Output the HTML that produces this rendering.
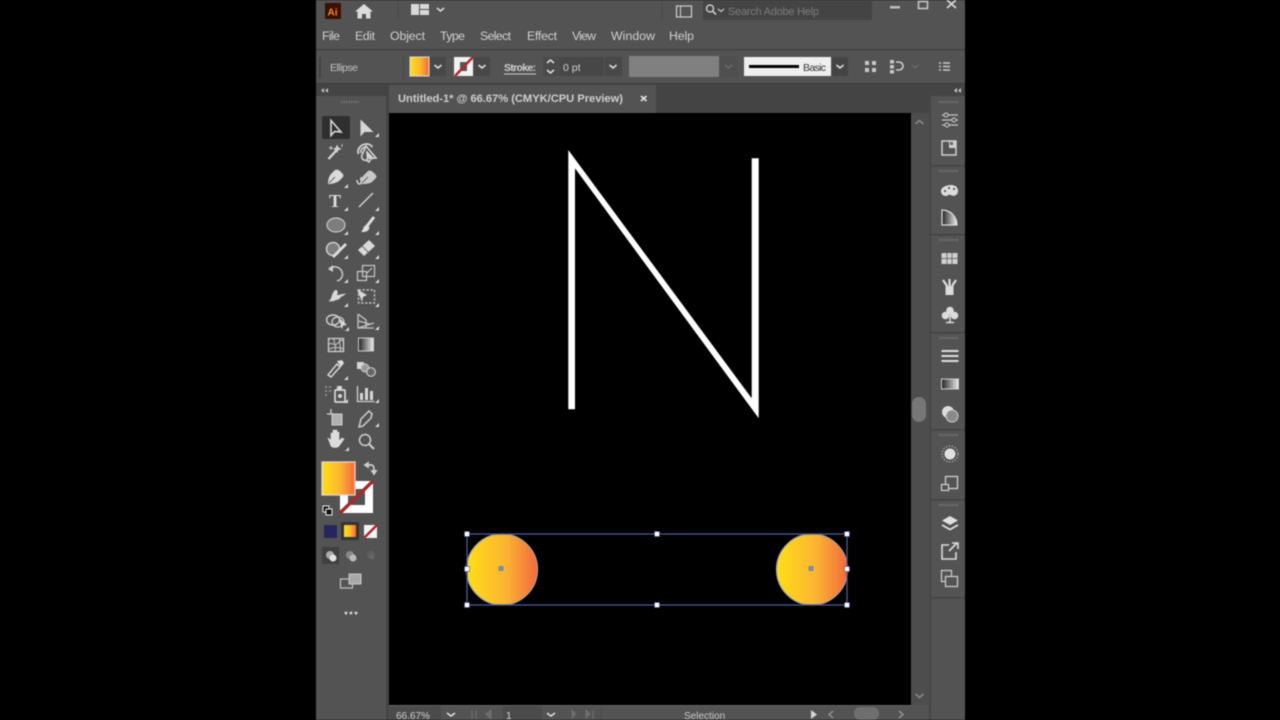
<!DOCTYPE html>
<html><head><meta charset="utf-8">
<style>
html,body{margin:0;padding:0;background:#000;width:1280px;height:720px;overflow:hidden}
svg{position:absolute;left:0;top:0;filter:blur(.6px)}
text{font-family:"Liberation Sans",sans-serif;fill:#d0d0d0}
.i{fill:none;stroke:#d4d4d4;stroke-width:1.600}
.f{fill:#d4d4d4;stroke:none}
.c{fill:none;stroke:#dedede;stroke-width:1.600}
</style></head><body>
<svg width="1280" height="720" viewBox="0 0 1280 720" xmlns="http://www.w3.org/2000/svg">
<defs>
<linearGradient id="g"><stop offset=".04" stop-color="#ffdc18"/><stop offset=".55" stop-color="#fbb532"/><stop offset="1" stop-color="#f2693e"/></linearGradient>
<linearGradient id="bw"><stop offset="0" stop-color="#222"/><stop offset="1" stop-color="#eee"/></linearGradient>
<g id="tri"><path d="M0 0h-4l4-4z" fill="#d8d8d8"/></g>
</defs>
<rect x="316" y="0" width="649" height="720" fill="#535353"/>
<!-- title bar -->
<rect x="325" y="3" width="16" height="16" rx="1" fill="#3c0f03"/>
<text x="327.500" y="15.500" font-size="10" font-weight="700" style="fill:#f08a2a">Ai</text>
<path d="M355 11.500l9-7.500 9 7.500h-2.500v7h-4.500v-4.500h-4v4.500h-4.500v-7z" fill="#dcdcdc"/>
<rect x="411" y="4" width="8" height="11" fill="#d8d8d8"/><rect x="420" y="4" width="9" height="5" fill="#d8d8d8"/><rect x="420" y="10" width="9" height="5" fill="#d8d8d8"/>
<path class="c" d="M437 8l3.500 3 3.500-3"/>
<path d="M398 0v20" stroke="#4b4b4b"/>
<path d="M662 0v22" stroke="#4b4b4b"/>
<rect x="676.500" y="6" width="15" height="11" fill="none" stroke="#cfcfcf" stroke-width="1.200"/><path d="M680.500 6v11" stroke="#cfcfcf"/>
<rect x="703" y="1" width="169" height="19" rx="1" fill="#444"/>
<circle cx="710" cy="8.500" r="3.500" fill="none" stroke="#c8c8c8" stroke-width="1.500"/><path d="M712.500 11l3.500 3.500" stroke="#c8c8c8" stroke-width="1.700"/>
<path d="M718 9l3 2.500 3-2.500" fill="none" stroke="#c8c8c8" stroke-width="1.200"/>
<text x="728" y="15" font-size="11" textLength="91" style="fill:#7c7c7c">Search Adobe Help</text>
<rect x="890" y="6" width="10" height="2.500" fill="#bdbdbd"/>
<rect x="918.500" y="1.500" width="9" height="7" fill="none" stroke="#c4c4c4" stroke-width="1.600"/>
<path d="M947 0l9 8M956 0l-9 8" stroke="#d4d4d4" stroke-width="1.800"/>
<!-- menu -->
<g font-size="12.300">
<text x="322" y="40" textLength="18">File</text><text x="355" y="40" textLength="20">Edit</text><text x="390" y="40" textLength="35">Object</text><text x="440" y="40" textLength="25">Type</text><text x="480" y="40" textLength="31">Select</text><text x="527" y="40" textLength="30">Effect</text><text x="572" y="40" textLength="24">View</text><text x="611" y="40" textLength="44">Window</text><text x="669" y="40" textLength="25">Help</text>
</g>
<rect x="316" y="49" width="649" height="1.500" fill="#414141"/>
<!-- control bar -->
<path d="M320 57v21" stroke="#444" stroke-width="2"/>
<text x="330" y="71" font-size="10.500" textLength="28" style="fill:#c0c0c0">Ellipse</text>
<rect x="403" y="56" width="1" height="24" fill="#4a4a4a"/>
<rect x="410" y="57" width="19" height="19" fill="url(#g)" stroke="#ddd" stroke-width="1"/>
<rect x="430" y="57" width="16" height="19" fill="#484848"/>
<path class="c" d="M434.500 65l3.500 3 3.500-3"/>
<rect x="454" y="57" width="19" height="19" fill="#f2f2f2"/>
<rect x="460" y="62" width="7" height="9" fill="#555"/>
<path d="M455 76l18-19" stroke="#b02a2a" stroke-width="2.500"/>
<rect x="474" y="57" width="16" height="19" fill="#484848"/>
<path class="c" d="M478.500 65l3.500 3 3.500-3"/>
<text x="504" y="71" font-size="10.500" font-weight="700" textLength="32">Stroke:</text>
<rect x="504" y="73.500" width="32" height="1" fill="#cfcfcf"/>
<rect x="543" y="57" width="15" height="19" fill="#4a4a4a"/>
<path class="c" d="M547 63l3.500-3 3.500 3M547 70l3.500 3 3.500-3"/>
<rect x="559" y="57" width="45" height="19" fill="#474747"/>
<text x="563" y="71" font-size="10.500">0 pt</text>
<rect x="605" y="57" width="17" height="19" fill="#484848"/>
<path class="c" d="M609.500 65l3.500 3 3.500-3"/>
<rect x="629" y="56" width="90" height="21" fill="#808080"/>
<rect x="720" y="56" width="18" height="21" fill="#4f4f4f"/>
<path d="M725 65l3.500 3 3.500-3" fill="none" stroke="#6f6f6f" stroke-width="1.400"/>
<rect x="744" y="57" width="87" height="19" fill="#efefef"/>
<rect x="749" y="65" width="50" height="3" fill="#000"/>
<text x="803" y="71" font-size="10.500" textLength="23" style="fill:#333">Basic</text>
<rect x="832" y="57" width="16" height="19" fill="#444"/>
<path class="c" d="M836.500 65l3.500 3 3.500-3"/>
<g fill="#c8c8c8"><rect x="865" y="61" width="4" height="4"/><rect x="872" y="61" width="4" height="4"/><rect x="865" y="68" width="4" height="4"/><rect x="872" y="68" width="4" height="4"/></g>
<rect x="890" y="60" width="4" height="3.500" fill="#c8c8c8"/><rect x="890" y="65" width="4" height="3.500" fill="#c8c8c8"/><rect x="890" y="70" width="4" height="3.500" fill="#c8c8c8"/>
<path d="M896 62h3a4 4 0 0 1 0 8h-3" fill="none" stroke="#d0d0d0" stroke-width="1.600"/>
<path d="M912 65l3 3 3-3" fill="none" stroke="#6d6d6d" stroke-width="1.300"/>
<path d="M939 63h2M943 63h7M939 66.500h2M943 66.500h7M939 70h2M943 70h7" stroke="#c8c8c8" stroke-width="1.500"/>
<!-- tab bar -->
<rect x="316" y="83" width="649" height="30" fill="#444"/>
<rect x="316" y="83" width="649" height="1" fill="#3d3d3d"/>
<rect x="389" y="85" width="267" height="28" fill="#535353"/>
<text x="398" y="102" font-size="11.200" font-weight="700" textLength="225" style="fill:#cecece">Untitled-1* @ 66.67% (CMYK/CPU Preview)</text>
<path d="M641 96l5.500 5M646.500 96l-5.500 5" stroke="#e0e0e0" stroke-width="1.800"/>
<!-- left toolbar -->
<rect x="316" y="96" width="70" height="624" fill="#535353"/>
<rect x="386" y="96" width="3" height="624" fill="#444"/>
<path d="M324 88l-3 2.500 3 2.500zM328 88l-3 2.500 3 2.500z" fill="#bdbdbd"/>
<path d="M341 102h18" stroke="#707070" stroke-width="2.500" stroke-dasharray="1.500 1"/>
<rect x="322" y="116" width="28" height="23" rx="2" fill="#2f2f2f"/>
<path d="M331 120.500v15l3.500-4 6.500 .5z" fill="none" stroke="#d8d8d8" stroke-width="1.600"/>
<path d="M360.500 119.500v17l4-4.500 9 0z" fill="#d6d6d6"/><use href="#tri" x="379" y="137"/>
<!-- wand / lasso -->
<path d="M328.500 159l10.500-11.500" stroke="#d6d6d6" stroke-width="2.400"/><path d="M337 145.500l1 2.500 2.500 1-2.500 1-1 2-1-2-2-1 2-1zM331 146v4M329 148h4M342 144v3" stroke="#d0d0d0" fill="#d0d0d0" stroke-width=".9"/>
<path d="M358.500 154c-2-5 3-10 8-10 3 0 4 1 6 3" fill="none" stroke="#d4d4d4" stroke-width="1.800"/><path d="M361 153c-1-3 2-6 5-6M366 146l10 12-5 .5-2 3.500-3-2c-3 1-5-2-4-5z" fill="none" stroke="#d4d4d4" stroke-width="1.600"/><path d="M366 150l8 8-5 .5-2 3z" fill="#d4d4d4"/>
<!-- pen -->
<path d="M328 184c0-4 1-8 3-10l4-4c2-1 4 0 6 2s3 3 2 5l-4 4c-3 2-7 3-11 3z" fill="#dadada"/><path d="M329 183l6-6" stroke="#666"/><use href="#tri" x="348" y="188"/>
<path d="M357 180c0 4 3 5 4 3s-1-4 0-5 1 1 2 2" fill="none" stroke="#d4d4d4" stroke-width="1.500"/><path d="M360 184c1-4 2-7 4-9l4-4c2-1 4 0 6 2s3 3 2 5l-4 4c-3 2-7 2-12 2z" fill="#c8c8c8"/><path d="M362 183l6-6" stroke="#666"/>
<!-- T / line -->
<text x="329" y="207" font-size="18" font-weight="700" style="font-family:'Liberation Serif',serif;fill:#dedede">T</text><use href="#tri" x="348" y="211"/>
<path d="M359 207l14-14" stroke="#d0d0d0" stroke-width="1.500"/><use href="#tri" x="379" y="211"/>
<!-- ellipse / brush -->
<ellipse cx="336" cy="225" rx="9" ry="7" fill="#7d7d7d" stroke="#c8c8c8" stroke-width="1.200"/><use href="#tri" x="348" y="235"/>
<path d="M374 217l-7 9" stroke="#dcdcdc" stroke-width="3"/><path d="M366 225c3 0 4 2 3 4-1 3-5 3-8 3 2-1 2-6 5-7z" fill="#dcdcdc"/><use href="#tri" x="379" y="235"/>
<!-- shaper / eraser -->
<circle cx="333" cy="249" r="6.500" fill="#7d7d7d" stroke="#cfcfcf" stroke-width="1.500"/><path d="M333 257l13-13" stroke="#dedede" stroke-width="2.800"/><use href="#tri" x="348" y="259"/>
<path d="M358 250l11-10 6 6-11 10z" fill="#dadada"/><path d="M362 246l7 7" stroke="#666"/><use href="#tri" x="379" y="259"/>
<!-- rotate / scale -->
<path d="M329 269c4-3 9-3 12 1s1 10-4 11" fill="none" stroke="#c8c8c8" stroke-width="1.600"/><path d="M333 265l-5 4 5 3z" fill="#d0d0d0"/><use href="#tri" x="348" y="283"/>
<rect x="357.500" y="271.500" width="9" height="9" fill="none" stroke="#c8c8c8" stroke-width="1.200"/><rect x="362.500" y="265.500" width="12" height="11" fill="none" stroke="#c8c8c8" stroke-width="1.200"/><path d="M367 273l5-5" stroke="#d0d0d0"/><use href="#tri" x="379" y="283"/>
<!-- width / free transform -->
<path d="M328 301c3-1 3-3 4-6 1-2 2-5 4-5s2 3 1 5c3 0 6-2 9-1l-5 3c-1 1-2 3-5 3-2 1-3 2-8 1z" fill="#d8d8d8"/><use href="#tri" x="348" y="307"/>
<rect x="358.500" y="290" width="16" height="13" fill="none" stroke="#bdbdbd" stroke-dasharray="2.500 1.500" stroke-width="1.400"/><path d="M357 289l10 6-4 2-1 5z" fill="#d8d8d8"/><use href="#tri" x="379" y="307"/>
<!-- shape builder / perspective -->
<ellipse cx="333" cy="320" rx="6.500" ry="5" fill="none" stroke="#cfcfcf" stroke-width="1.400"/><ellipse cx="338" cy="322" rx="6" ry="5" fill="none" stroke="#cfcfcf" stroke-width="1.300"/><path d="M339 318l8 7-4 .5-1 4z" fill="#dcdcdc"/><use href="#tri" x="349" y="331"/>
<path d="M358 314v14h16M358 314l8 6v8M358 328l16-5M358 321l12 3" fill="none" stroke="#c4c4c4" stroke-width="1.300"/><use href="#tri" x="379" y="330"/>
<!-- mesh / gradient -->
<rect x="328.500" y="338.500" width="15" height="13" fill="none" stroke="#d0d0d0" stroke-width="1.300"/><path d="M329 344c4-2 5 3 9-1s3-3 5-2M329 349c4-1 6-3 14 0M334 338c-1 4 3 8 1 13M340 338c-2 5 2 8 0 13" fill="none" stroke="#c8c8c8"/>
<rect x="358.500" y="338" width="15" height="13" fill="url(#bw)" stroke="#ccc"/>
<!-- eyedropper / blend -->
<path d="M328 375l9-11 3 3-9 10z" fill="none" stroke="#d4d4d4" stroke-width="1.500"/><path d="M337 361l5-1 2 3-3 4z" fill="#dcdcdc"/><use href="#tri" x="348" y="380"/>
<rect x="357" y="362" width="7" height="7" fill="#d6d6d6"/><circle cx="365" cy="368" r="4" fill="#999" stroke="#ccc"/><circle cx="371" cy="372" r="4.300" fill="#666" stroke="#ccc" stroke-width="1.200"/>
<!-- symbol sprayer / graph -->
<path d="M325 387h2M329 387h2M325 391h2M329 391h2M325 395h2" stroke="#9b9b9b" stroke-width="1.500"/><rect x="335" y="390" width="10" height="12" rx="1" fill="none" stroke="#d8d8d8" stroke-width="1.700"/><rect x="337" y="386" width="5" height="4" fill="#d8d8d8"/><circle cx="340" cy="396" r="2" fill="#d8d8d8"/><use href="#tri" x="348" y="403"/>
<path d="M357.500 386v15.500h17" fill="none" stroke="#d0d0d0" stroke-width="1.300"/><path d="M360 393h3v7h-3zM365 388h3v12h-3zM370 391h3v9h-3z" fill="#d8d8d8"/><use href="#tri" x="379" y="403"/>
<!-- artboard / slice -->
<path d="M331 409v5M327 414h7" stroke="#cfcfcf" stroke-width="1.300"/><rect x="332" y="414" width="10" height="11" fill="#b0b0b0" stroke="#cfcfcf"/>
<path d="M359 427l2-8 8-8 3 3-1 4-8 8z" fill="none" stroke="#d0d0d0" stroke-width="1.500"/><use href="#tri" x="379" y="427"/>
<!-- hand / zoom -->
<path d="M328 438l3 2v-7h2v5-8h2v8-8h2v8-6h2v9l3-3 2 1-5 7c-2 2-6 2-8 0z" fill="#dcdcdc" stroke="#dcdcdc" stroke-width=".6"/><use href="#tri" x="349" y="451"/>
<circle cx="365" cy="440" r="5.500" fill="none" stroke="#cfcfcf" stroke-width="1.500"/><path d="M369 444l5 5" stroke="#cfcfcf" stroke-width="2"/>
<!-- fill/stroke -->
<rect x="340" y="481" width="33" height="32" fill="#fff"/>
<rect x="348" y="489" width="17" height="16" fill="#535353"/>
<path d="M340 513l33-32" stroke="#a82a2a" stroke-width="3.500"/>
<rect x="322" y="462" width="33" height="33" fill="url(#g)" stroke="#e6d8c8" stroke-width="1.300"/>
<path d="M367 465h4c2 0 3 2 3 4v4M365 465l3-2v4zM372 471l2 3 2-3z" fill="none" stroke="#cfcfcf" stroke-width="1.700"/>
<rect x="323" y="506" width="6" height="6" fill="#111" stroke="#eee"/><rect x="326" y="509" width="6" height="6" fill="#111" stroke="#eee"/>
<rect x="324" y="525" width="13" height="13" fill="#26265e"/>
<rect x="341" y="522" width="18" height="18" rx="1" fill="#333"/>
<rect x="344" y="525" width="12" height="12" fill="url(#g)"/>
<rect x="364" y="525" width="13" height="13" fill="#f4f4f4"/><path d="M364 538l13-13" stroke="#a82a2a" stroke-width="2.500"/>
<rect x="322" y="547" width="17" height="17" fill="#404040"/>
<circle cx="330" cy="555" r="4" fill="#aaa"/><circle cx="333" cy="558" r="3.500" fill="#e4e4e4"/>
<circle cx="350" cy="555" r="4" fill="#888"/><circle cx="353" cy="558" r="3.500" fill="#bbb"/>
<circle cx="371" cy="555" r="4" fill="#5f5f5f"/><circle cx="372" cy="557" r="2.500" fill="#666"/>
<rect x="340.500" y="579" width="12" height="9" fill="none" stroke="#bdbdbd" stroke-width="1.300"/>
<rect x="349" y="574" width="12" height="10" fill="#a8a8a8" stroke="#c8c8c8"/>
<circle cx="346" cy="613" r="1.500" fill="#cfcfcf"/><circle cx="351" cy="613" r="1.500" fill="#cfcfcf"/><circle cx="356" cy="613" r="1.500" fill="#cfcfcf"/>
<!-- canvas -->
<rect x="389" y="113" width="522" height="592" fill="#000"/>
<polygon points="568.300,150 751.700,398.300 751.700,158.300 758.700,158.300 758.700,418.300 575,168.300 575,409.300 568.300,409.300" fill="#fff"/>
<circle cx="502" cy="569.500" r="35.500" fill="url(#g)" stroke="#a9a49e" stroke-width="1.200"/>
<circle cx="812" cy="569.500" r="35.500" fill="url(#g)" stroke="#a9a49e" stroke-width="1.200"/>
<rect x="498.500" y="566" width="5" height="5" fill="#7f8a9c"/>
<rect x="808.500" y="566" width="5" height="5" fill="#7f8a9c"/>
<rect x="467" y="534" width="380" height="71" fill="none" stroke="#4d5a94" stroke-width="1.300"/>
<g fill="#fff" stroke="#3d4a80" stroke-width=".6">
<rect x="464.500" y="531.500" width="5" height="5"/><rect x="654.500" y="531.500" width="5" height="5"/><rect x="844.500" y="531.500" width="5" height="5"/>
<rect x="464.500" y="566.500" width="5" height="5"/><rect x="844.500" y="566.500" width="5" height="5"/>
<rect x="464.500" y="602.500" width="5" height="5"/><rect x="654.500" y="602.500" width="5" height="5"/><rect x="844.500" y="602.500" width="5" height="5"/>
</g>
<!-- vertical scrollbar -->
<rect x="911" y="113" width="18" height="607" fill="#4d4d4d"/>
<path d="M915.500 124l4-3.500 4 3.500" fill="none" stroke="#8a8a8a" stroke-width="1.500"/>
<path d="M915.500 694l4 3.500 4-3.500" fill="none" stroke="#8a8a8a" stroke-width="1.500"/>
<rect x="912" y="397" width="14" height="25" rx="7" fill="#777"/>
<!-- right dock -->
<rect x="929" y="96" width="36" height="624" fill="#535353"/>
<rect x="929" y="96" width="2" height="624" fill="#464646"/>
<path d="M957 88l-3 2.500 3 2.500zM961 88l-3 2.500 3 2.500z" fill="#c4c4c4"/>
<g fill="#424242"><rect x="930" y="165" width="35" height="1.500"/><rect x="930" y="234" width="35" height="1.500"/><rect x="930" y="332" width="35" height="1.500"/><rect x="930" y="429" width="35" height="1.500"/><rect x="930" y="499" width="35" height="1.500"/><rect x="930" y="597" width="35" height="1.500"/></g>
<g stroke="#6f6f6f" stroke-width="2.500" stroke-dasharray="1.500 1"><path d="M939 102h19M939 171h19M939 240h19M939 338h19M939 435h19M939 505h19"/></g>
<!-- r icons -->
<path d="M942 115h16M942 120h16M942 125h16" stroke="#c4c4c4" stroke-width="1.200"/><circle cx="946" cy="115" r="2" fill="#535353" stroke="#cfcfcf"/><circle cx="954" cy="120" r="2" fill="#535353" stroke="#cfcfcf"/><circle cx="947" cy="125" r="2" fill="#535353" stroke="#cfcfcf"/>
<rect x="942" y="141" width="14" height="14" fill="none" stroke="#d0d0d0" stroke-width="1.500"/><path d="M949 141h7v7h-7z" fill="#d0d0d0"/><rect x="950" y="142" width="3" height="3" fill="#666"/>
<path d="M941 191c0-4 6-6 10-6s7 2 7 6-4 6-7 4c-3-1-3 1-5 1-3 0-5-2-5-5z" fill="#dcdcdc"/><circle cx="945" cy="191" r="1.100" fill="#555"/><circle cx="949" cy="188" r="1.100" fill="#555"/><circle cx="954" cy="189" r="1.100" fill="#555"/>
<path d="M942 210c8 0 15 6 15 15h-15z" fill="url(#bw)" stroke="#dcdcdc" stroke-width="1.200"/>
<rect x="941.500" y="253" width="16" height="11" fill="#d0d0d0"/><path d="M941 258.500h17M947 253v11M952 253v11" stroke="#707070"/>
<rect x="945.500" y="286" width="8" height="9" fill="#dcdcdc"/><path d="M949.500 286v-7M947 286l-4-6M952 286l4-6" stroke="#dcdcdc" stroke-width="2.200"/>
<circle cx="945.500" cy="315.500" r="3.800" fill="#dcdcdc"/><circle cx="954.500" cy="315.500" r="3.800" fill="#dcdcdc"/><circle cx="950" cy="310.500" r="3.800" fill="#dcdcdc"/><path d="M950 313v9M946 322.500h8" stroke="#dcdcdc" stroke-width="1.500"/>
<path d="M941.500 351h17M941.500 356h17M941.500 361h17" stroke="#dedede" stroke-width="1.900"/>
<rect x="941.500" y="379" width="17" height="10" fill="url(#bw)" stroke="#cfcfcf"/>
<circle cx="948" cy="412" r="6" fill="#dcdcdc"/><circle cx="952" cy="416" r="6" fill="#8a8a8a" stroke="#cfcfcf"/>
<circle cx="950" cy="454" r="5.500" fill="#e0e0e0"/><circle cx="950" cy="454" r="8" fill="none" stroke="#a8a8a8" stroke-width="1.300" stroke-dasharray="1.500 1.500"/>
<rect x="945.500" y="476.500" width="12" height="12" fill="none" stroke="#cfcfcf" stroke-width="1.300"/><rect x="941.500" y="484.500" width="7" height="6" fill="#535353" stroke="#cfcfcf" stroke-width="1.200"/>
<path d="M950 516l8 4.500-8 4.500-8-4.500z" fill="#e0e0e0"/><path d="M942 525l8 4.500 8-4.500" fill="none" stroke="#e0e0e0" stroke-width="1.800"/>
<path d="M949 545h-7v14h14v-7" fill="none" stroke="#dcdcdc" stroke-width="1.600"/><path d="M949 551l8-8M952 543h6v6" fill="none" stroke="#dcdcdc" stroke-width="1.600"/>
<rect x="941.500" y="570.500" width="10" height="11" fill="none" stroke="#c8c8c8" stroke-width="1.300"/><rect x="945.500" y="576.500" width="12" height="10" fill="#535353" stroke="#c8c8c8" stroke-width="1.300"/>
<!-- status bar -->
<rect x="389" y="705" width="540" height="15" fill="#535353"/>
<rect x="389" y="705" width="522" height="1" fill="#666"/>
<rect x="390" y="706" width="51" height="14" fill="#4b4b4b"/>
<text x="396" y="719" font-size="10" style="fill:#cfcfcf">66.67%</text>
<path class="c" d="M447 713l4 3 4-3M547 713l4 3 4-3"/>
<path d="M472 710v9M476 710v9M486 714l5-4v9z" stroke="#6e6e6e" fill="#6e6e6e" stroke-width="1.200"/>
<rect x="503" y="706" width="39" height="14" fill="#4b4b4b"/>
<text x="506" y="719" font-size="10" style="fill:#d8d8d8">1</text>
<path d="M572 710l4 4-4 4zM586 710l4 4-4 4zM593 710v9" stroke="#6e6e6e" fill="#6e6e6e"/>
<path d="M601 706v14" stroke="#4a4a4a"/>
<text x="684" y="719" font-size="10" style="fill:#cacaca">Selection</text>
<path d="M811 710l6 4.500-6 4.500z" fill="#d6d6d6"/>
<path d="M833 711l-4 3.500 4 3.500M899 711l4 3.500-4 3.500" fill="none" stroke="#999" stroke-width="1.300"/>
<rect x="854" y="707" width="25" height="13" rx="6" fill="#6f6f6f"/>
</svg>
</body></html>
